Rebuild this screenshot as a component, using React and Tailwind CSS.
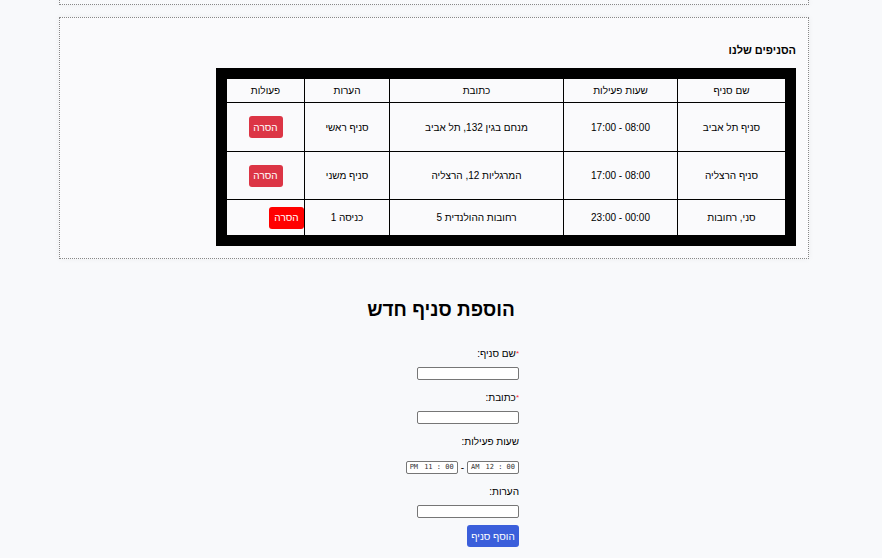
import React from 'react';

const branches = [
  { name: 'סניף תל אביב', hours: '08:00 - 17:00', address: 'מנחם בגין 132, תל אביב', notes: 'סניף ראשי', legacy: false },
  { name: 'סניף הרצליה', hours: '08:00 - 17:00', address: 'המרגליות 12, הרצליה', notes: 'סניף משני', legacy: false },
  { name: 'סני, רחובות', hours: '00:00 - 23:00', address: 'רחובות ההולנדית 5', notes: 'כניסה 1', legacy: true },
];

const rowHeights = ['h-[49px]', 'h-[48px]', 'h-[36px]'];

const TimeBox = ({ period, time }) => (
  <div dir="ltr" className="w-[52px] h-[13px] border border-[#767676] rounded-[2px] bg-white flex items-center justify-between pl-[3px] pr-[3px] font-['DejaVu_Sans_Mono',monospace] text-[7px] leading-none text-[#333]">
    <span>{period}</span>
    <span className="whitespace-pre">{time}</span>
  </div>
);

const Field = ({ label, required, children, first }) => (
  <div className={first ? '' : 'mt-[10px]'}>
    <div className="h-[16px] leading-[16px] text-[10px] text-black">
      {required && <span className="text-red-500 align-top text-[8px]">*</span>}
      {label}
    </div>
    {children}
  </div>
);

export default function App() {
  return (
    <div dir="rtl" className="min-h-screen bg-[#f8f9fb] text-black font-['Liberation_Sans','Noto_Sans',sans-serif] pb-4">
      {/* tail of the previous card */}
      <div className="mr-[73px] w-[750px] h-[5px] border-x border-b border-dotted border-[#888] shadow-[0_0_6px_rgba(0,0,0,0.05)]" />

      {/* branches card */}
      <div className="mr-[73px] mt-[12px] w-[750px] h-[242px] border border-dotted border-[#888] bg-[#fafafc] shadow-[0_0_6px_rgba(0,0,0,0.05)] pt-[24px] pr-[12px]">
        <h3 className="text-[11px] leading-[16px] font-bold">הסניפים שלנו</h3>
        <div className="mt-[10px] w-[580px] border-[10px] border-black bg-[#fafafc]">
          <table className="w-full table-fixed border-collapse text-[10px] text-center">
            <thead>
              <tr className="h-[24px]">
                <th className="w-[108px] border border-black font-normal">שם סניף</th>
                <th className="w-[114px] border border-black font-normal">שעות פעילות</th>
                <th className="w-[174px] border border-black font-normal">כתובת</th>
                <th className="w-[85px] border border-black font-normal">הערות</th>
                <th className="border border-black font-normal">פעולות</th>
              </tr>
            </thead>
            <tbody>
              {branches.map((b, i) => (
                <tr key={b.name} className={rowHeights[i]}>
                  <td className="border border-black">{b.name}</td>
                  <td className="border border-black">{b.hours}</td>
                  <td className="border border-black">{b.address}</td>
                  <td className="border border-black">{b.notes}</td>
                  {b.legacy ? (
                    <td className="border border-black text-right">
                      <button className="h-[22px] w-[35px] bg-[#ff0000] text-white text-[10px] rounded-[3px]">הסרה</button>
                    </td>
                  ) : (
                    <td className="border border-black">
                      <button className="h-[22px] w-[34px] bg-[#dc3545] text-white text-[10px] rounded-[3px]">הסרה</button>
                    </td>
                  )}
                </tr>
              ))}
            </tbody>
          </table>
        </div>
      </div>

      {/* add branch */}
      <h2 className="mt-[38px] text-center text-[19px] leading-[26px] font-bold">הוספת סניף חדש</h2>

      <form className="mx-auto mt-[23px] w-[156px] flex flex-col items-start" onSubmit={(e) => e.preventDefault()}>
        <Field label="שם סניף:" required first>
          <input className="mt-[5px] block w-[102px] h-[13px] border border-[#767676] rounded-[2px] bg-white" />
        </Field>
        <Field label="כתובת:" required>
          <input className="mt-[5px] block w-[102px] h-[13px] border border-[#767676] rounded-[2px] bg-white" />
        </Field>
        <Field label="שעות פעילות:">
          <div className="mt-[11px] flex items-center gap-[3px]">
            <TimeBox period="AM" time="12 : 00" />
            <span className="text-[10px] leading-none">-</span>
            <TimeBox period="PM" time="11 : 00" />
          </div>
        </Field>
        <Field label="הערות:">
          <input className="mt-[5px] block w-[102px] h-[13px] border border-[#767676] rounded-[2px] bg-white" />
        </Field>
        <button type="submit" className="mt-[7px] w-[52px] h-[22px] rounded-[3px] bg-[#3b5fdb] text-white text-[10px]">הוסף סניף</button>
      </form>
    </div>
  );
}
